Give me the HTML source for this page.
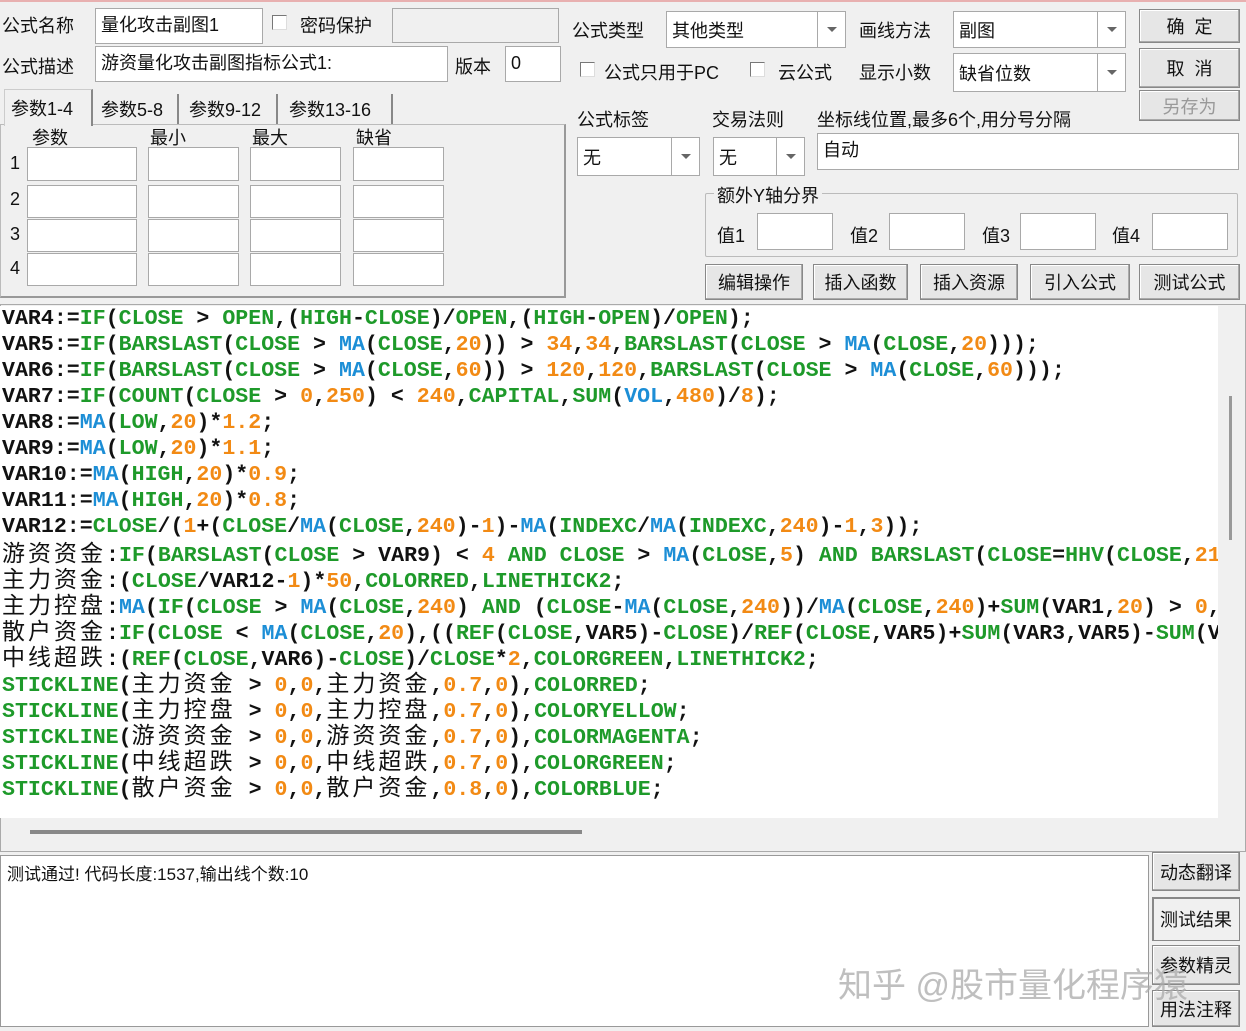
<!DOCTYPE html>
<html><head><meta charset="utf-8"><style>
*{margin:0;padding:0;box-sizing:border-box}
body{width:1246px;height:1031px;background:#f0f0f0;position:relative;overflow:hidden;font-family:"Liberation Sans","Noto Sans CJK SC",sans-serif;font-size:18px;color:#111}
.a{position:absolute;white-space:nowrap}
.in{position:absolute;background:#fff;border:1px solid #a9a9a9;font-size:18px;padding:3px 5px;line-height:26px}
.dis{background:#f0f0f0}
.cb{position:absolute;width:15px;height:15px;border:1px solid #777;border-right-color:#ddd;border-bottom-color:#ddd;background:#fff}
.cmb{position:absolute;background:#fff;border:1px solid #a9a9a9;font-size:18px;padding:0 5px;display:flex;align-items:center}
.cmb .ar{position:absolute;right:0;top:0;bottom:0;width:28px;border-left:1px solid #a9a9a9;display:flex;align-items:center;justify-content:center}
.cmb .ar:after{content:"";border-left:5px solid transparent;border-right:5px solid transparent;border-top:5px solid #666}
.btn{position:absolute;background:#e6e6e6;border:1px solid #888;box-shadow:inset -1px -1px #aaa,inset 1px 1px #fff;font-size:18px;display:flex;align-items:center;justify-content:center}
.ed{position:absolute;left:0;top:306px;width:1218px;height:512px;background:#fff;overflow:hidden;font-family:"Liberation Mono",monospace;font-weight:bold;font-size:21.6px;line-height:26px;color:#111;padding-left:2px}
.ed div{white-space:pre;height:26px;overflow:hidden}
.g{color:#1e9a2a}.b{color:#1c8ed6}.o{color:#f28a14}
.c{font-family:"Noto Sans CJK SC",sans-serif;font-weight:normal;font-size:23px;letter-spacing:3px;line-height:1}
</style></head><body>
<div class="a" style="left:0;top:0;width:1246px;height:2px;background:#e8b0b0"></div>
<div class="a" style="left:2px;top:12px">公式名称</div>
<div class="in" style="left:95px;top:8px;width:168px;height:36px">量化攻击副图1</div>
<div class="cb" style="left:272px;top:15px"></div>
<div class="a" style="left:300px;top:12px">密码保护</div>
<div class="in dis" style="left:392px;top:8px;width:167px;height:35px"></div>
<div class="a" style="left:2px;top:53px">公式描述</div>
<div class="in" style="left:95px;top:46px;width:353px;height:36px">游资量化攻击副图指标公式1:</div>
<div class="a" style="left:455px;top:53px">版本</div>
<div class="in" style="left:505px;top:46px;width:56px;height:36px">0</div>
<div class="a" style="left:0;top:124px;width:566px;height:174px;border:1px solid #bbb;border-right:2px solid #999;border-bottom:2px solid #999"></div>
<div class="a" style="left:4px;top:89px;width:89px;height:37px;background:#f0f0f0;border:1px solid #ccc;border-bottom:none;border-right:2px solid #888;padding:5px 6px">参数1-4</div>
<div class="a" style="left:95px;top:94px;width:84px;height:30px;border-right:2px solid #888;padding:2px 6px">参数5-8</div>
<div class="a" style="left:183px;top:94px;width:95px;height:30px;border-right:2px solid #888;padding:2px 6px">参数9-12</div>
<div class="a" style="left:283px;top:94px;width:110px;height:30px;border-right:2px solid #888;padding:2px 6px">参数13-16</div>
<div class="a" style="left:32px;top:124px">参数</div>
<div class="a" style="left:150px;top:124px">最小</div>
<div class="a" style="left:252px;top:124px">最大</div>
<div class="a" style="left:356px;top:124px">缺省</div>
<div class="a" style="left:10px;top:153px">1</div><div class="a" style="left:10px;top:189px">2</div><div class="a" style="left:10px;top:224px">3</div><div class="a" style="left:10px;top:258px">4</div>
<div class="in" style="left:27px;top:147px;width:110px;height:34px"></div><div class="in" style="left:148px;top:147px;width:91px;height:34px"></div><div class="in" style="left:250px;top:147px;width:91px;height:34px"></div><div class="in" style="left:353px;top:147px;width:91px;height:34px"></div>
<div class="in" style="left:27px;top:185px;width:110px;height:33px"></div><div class="in" style="left:148px;top:185px;width:91px;height:33px"></div><div class="in" style="left:250px;top:185px;width:91px;height:33px"></div><div class="in" style="left:353px;top:185px;width:91px;height:33px"></div>
<div class="in" style="left:27px;top:219px;width:110px;height:33px"></div><div class="in" style="left:148px;top:219px;width:91px;height:33px"></div><div class="in" style="left:250px;top:219px;width:91px;height:33px"></div><div class="in" style="left:353px;top:219px;width:91px;height:33px"></div>
<div class="in" style="left:27px;top:253px;width:110px;height:33px"></div><div class="in" style="left:148px;top:253px;width:91px;height:33px"></div><div class="in" style="left:250px;top:253px;width:91px;height:33px"></div><div class="in" style="left:353px;top:253px;width:91px;height:33px"></div>
<div class="a" style="left:572px;top:17px">公式类型</div>
<div class="cmb" style="left:666px;top:11px;width:180px;height:37px">其他类型<span class="ar"></span></div>
<div class="a" style="left:859px;top:17px">画线方法</div>
<div class="cmb" style="left:953px;top:11px;width:173px;height:37px">副图<span class="ar"></span></div>
<div class="btn" style="left:1139px;top:9px;width:101px;height:34px">确&nbsp;&nbsp;定</div>
<div class="cb" style="left:580px;top:62px"></div>
<div class="a" style="left:604px;top:59px">公式只用于PC</div>
<div class="cb" style="left:750px;top:62px"></div>
<div class="a" style="left:778px;top:59px">云公式</div>
<div class="a" style="left:859px;top:59px">显示小数</div>
<div class="cmb" style="left:953px;top:53px;width:173px;height:39px">缺省位数<span class="ar"></span></div>
<div class="btn" style="left:1139px;top:48px;width:101px;height:40px">取&nbsp;&nbsp;消</div>
<div class="btn" style="left:1139px;top:90px;width:101px;height:31px;color:#999">另存为</div>
<div class="a" style="left:577px;top:106px">公式标签</div>
<div class="a" style="left:712px;top:106px">交易法则</div>
<div class="a" style="left:817px;top:106px">坐标线位置,最多6个,用分号分隔</div>
<div class="cmb" style="left:577px;top:137px;width:123px;height:39px">无<span class="ar"></span></div>
<div class="cmb" style="left:713px;top:137px;width:92px;height:39px">无<span class="ar"></span></div>
<div class="in" style="left:817px;top:133px;width:422px;height:37px">自动</div>
<div class="a" style="left:705px;top:193px;width:533px;height:64px;border:1px solid #bbb;border-radius:2px"></div>
<div class="a" style="left:714px;top:182px;background:#f0f0f0;padding:0 3px">额外Y轴分界</div>
<div class="a" style="left:717px;top:222px">值1</div><div class="in" style="left:757px;top:213px;width:76px;height:37px"></div>
<div class="a" style="left:850px;top:222px">值2</div><div class="in" style="left:889px;top:213px;width:76px;height:37px"></div>
<div class="a" style="left:982px;top:222px">值3</div><div class="in" style="left:1020px;top:213px;width:76px;height:37px"></div>
<div class="a" style="left:1112px;top:222px">值4</div><div class="in" style="left:1152px;top:213px;width:76px;height:37px"></div>
<div class="btn" style="left:705px;top:264px;width:98px;height:36px">编辑操作</div>
<div class="btn" style="left:813px;top:264px;width:95px;height:36px">插入函数</div>
<div class="btn" style="left:920px;top:264px;width:98px;height:36px">插入资源</div>
<div class="btn" style="left:1030px;top:264px;width:100px;height:36px">引入公式</div>
<div class="btn" style="left:1139px;top:264px;width:101px;height:36px">测试公式</div>
<div class="a" style="left:0;top:304px;width:1246px;height:548px;border:1px solid #aaa;background:#f0f0f0"></div>
<div class="ed">
<div>VAR4:=<span class="g">IF</span>(<span class="g">CLOSE</span> &gt; <span class="g">OPEN</span>,(<span class="g">HIGH</span>-<span class="g">CLOSE</span>)/<span class="g">OPEN</span>,(<span class="g">HIGH</span>-<span class="g">OPEN</span>)/<span class="g">OPEN</span>);</div>
<div>VAR5:=<span class="g">IF</span>(<span class="g">BARSLAST</span>(<span class="g">CLOSE</span> &gt; <span class="b">MA</span>(<span class="g">CLOSE</span>,<span class="o">20</span>)) &gt; <span class="o">34</span>,<span class="o">34</span>,<span class="g">BARSLAST</span>(<span class="g">CLOSE</span> &gt; <span class="b">MA</span>(<span class="g">CLOSE</span>,<span class="o">20</span>)));</div>
<div>VAR6:=<span class="g">IF</span>(<span class="g">BARSLAST</span>(<span class="g">CLOSE</span> &gt; <span class="b">MA</span>(<span class="g">CLOSE</span>,<span class="o">60</span>)) &gt; <span class="o">120</span>,<span class="o">120</span>,<span class="g">BARSLAST</span>(<span class="g">CLOSE</span> &gt; <span class="b">MA</span>(<span class="g">CLOSE</span>,<span class="o">60</span>)));</div>
<div>VAR7:=<span class="g">IF</span>(<span class="g">COUNT</span>(<span class="g">CLOSE</span> &gt; <span class="o">0</span>,<span class="o">250</span>) &lt; <span class="o">240</span>,<span class="g">CAPITAL</span>,<span class="g">SUM</span>(<span class="b">VOL</span>,<span class="o">480</span>)/<span class="o">8</span>);</div>
<div>VAR8:=<span class="b">MA</span>(<span class="g">LOW</span>,<span class="o">20</span>)*<span class="o">1.2</span>;</div>
<div>VAR9:=<span class="b">MA</span>(<span class="g">LOW</span>,<span class="o">20</span>)*<span class="o">1.1</span>;</div>
<div>VAR10:=<span class="b">MA</span>(<span class="g">HIGH</span>,<span class="o">20</span>)*<span class="o">0.9</span>;</div>
<div>VAR11:=<span class="b">MA</span>(<span class="g">HIGH</span>,<span class="o">20</span>)*<span class="o">0.8</span>;</div>
<div>VAR12:=<span class="g">CLOSE</span>/(<span class="o">1</span>+(<span class="g">CLOSE</span>/<span class="b">MA</span>(<span class="g">CLOSE</span>,<span class="o">240</span>)-<span class="o">1</span>)-<span class="b">MA</span>(<span class="g">INDEXC</span>/<span class="b">MA</span>(<span class="g">INDEXC</span>,<span class="o">240</span>)-<span class="o">1</span>,<span class="o">3</span>));</div>
<div><span class="c">游资资金</span>:<span class="g">IF</span>(<span class="g">BARSLAST</span>(<span class="g">CLOSE</span> &gt; VAR9) &lt; <span class="o">4</span> <span class="g">AND</span> <span class="g">CLOSE</span> &gt; <span class="b">MA</span>(<span class="g">CLOSE</span>,<span class="o">5</span>) <span class="g">AND</span> <span class="g">BARSLAST</span>(<span class="g">CLOSE</span>=<span class="g">HHV</span>(<span class="g">CLOSE</span>,<span class="o">21</span>)) &lt; <span class="o">5</span>,<span class="o">1</span>,<span class="o">0</span>);</div>
<div><span class="c">主力资金</span>:(<span class="g">CLOSE</span>/VAR12-<span class="o">1</span>)*<span class="o">50</span>,<span class="g">COLORRED</span>,<span class="g">LINETHICK2</span>;</div>
<div><span class="c">主力控盘</span>:<span class="b">MA</span>(<span class="g">IF</span>(<span class="g">CLOSE</span> &gt; <span class="b">MA</span>(<span class="g">CLOSE</span>,<span class="o">240</span>) <span class="g">AND</span> (<span class="g">CLOSE</span>-<span class="b">MA</span>(<span class="g">CLOSE</span>,<span class="o">240</span>))/<span class="b">MA</span>(<span class="g">CLOSE</span>,<span class="o">240</span>)+<span class="g">SUM</span>(VAR1,<span class="o">20</span>) &gt; <span class="o">0</span>,<span class="o">1</span>,<span class="o">0</span>));</div>
<div><span class="c">散户资金</span>:<span class="g">IF</span>(<span class="g">CLOSE</span> &lt; <span class="b">MA</span>(<span class="g">CLOSE</span>,<span class="o">20</span>),((<span class="g">REF</span>(<span class="g">CLOSE</span>,VAR5)-<span class="g">CLOSE</span>)/<span class="g">REF</span>(<span class="g">CLOSE</span>,VAR5)+<span class="g">SUM</span>(VAR3,VAR5)-<span class="g">SUM</span>(VAR4,VAR5)));</div>
<div><span class="c">中线超跌</span>:(<span class="g">REF</span>(<span class="g">CLOSE</span>,VAR6)-<span class="g">CLOSE</span>)/<span class="g">CLOSE</span>*<span class="o">2</span>,<span class="g">COLORGREEN</span>,<span class="g">LINETHICK2</span>;</div>
<div><span class="g">STICKLINE</span>(<span class="c">主力资金</span> &gt; <span class="o">0</span>,<span class="o">0</span>,<span class="c">主力资金</span>,<span class="o">0.7</span>,<span class="o">0</span>),<span class="g">COLORRED</span>;</div>
<div><span class="g">STICKLINE</span>(<span class="c">主力控盘</span> &gt; <span class="o">0</span>,<span class="o">0</span>,<span class="c">主力控盘</span>,<span class="o">0.7</span>,<span class="o">0</span>),<span class="g">COLORYELLOW</span>;</div>
<div><span class="g">STICKLINE</span>(<span class="c">游资资金</span> &gt; <span class="o">0</span>,<span class="o">0</span>,<span class="c">游资资金</span>,<span class="o">0.7</span>,<span class="o">0</span>),<span class="g">COLORMAGENTA</span>;</div>
<div><span class="g">STICKLINE</span>(<span class="c">中线超跌</span> &gt; <span class="o">0</span>,<span class="o">0</span>,<span class="c">中线超跌</span>,<span class="o">0.7</span>,<span class="o">0</span>),<span class="g">COLORGREEN</span>;</div>
<div><span class="g">STICKLINE</span>(<span class="c">散户资金</span> &gt; <span class="o">0</span>,<span class="o">0</span>,<span class="c">散户资金</span>,<span class="o">0.8</span>,<span class="o">0</span>),<span class="g">COLORBLUE</span>;</div>
</div>
<div class="a" style="left:1229px;top:396px;width:3px;height:144px;background:#999"></div>
<div class="a" style="left:30px;top:830px;width:552px;height:4px;background:#888"></div>
<div class="a" style="left:0;top:855px;width:1149px;height:172px;background:#fff;border:1px solid #999"></div>
<div class="a" style="left:7px;top:860px;font-size:17px">测试通过! 代码长度:1537,输出线个数:10</div>
<div class="btn" style="left:1152px;top:852px;width:88px;height:39px">动态翻译</div>
<div class="btn" style="left:1152px;top:897px;width:88px;height:44px;box-shadow:inset 1px 1px #888;background:#f0f0f0">测试结果</div>
<div class="btn" style="left:1152px;top:945px;width:88px;height:40px">参数精灵</div>
<div class="btn" style="left:1152px;top:990px;width:88px;height:37px">用法注释</div>
<div class="a" style="left:838px;top:958px;font-size:34px;color:rgba(170,170,170,0.75)">知乎 @股市量化程序猿</div>
</body></html>
